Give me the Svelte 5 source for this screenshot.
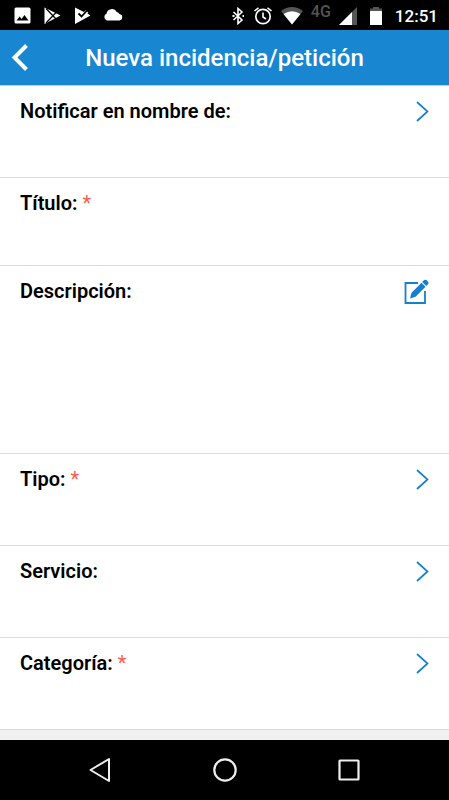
<script>
  let title = $state('');
  let description = $state('');
</script>

{#snippet chevron()}
  <svg class="icon" width="24" height="24" viewBox="0 0 24 24" aria-hidden="true">
    <path d="M12 3 L22.500 12.500 L12 22" fill="none" stroke="currentColor" stroke-width="1.700" />
  </svg>
{/snippet}

{#snippet picker(label, required)}
  <button type="button" class="row picker">
    <span class="label">{label}{#if required}<span class="required">{' *'}</span>{/if}</span>
    {@render chevron()}
  </button>
{/snippet}

<div class="screen">
  <div class="status-bar">
    <div class="notifications">
      <!-- picture -->
      <svg width="17" height="18" viewBox="0 0 17 18">
        <rect x="0.500" y="0.500" width="16" height="16" rx="1.500" fill="#fff" />
        <path d="M2.500 13.500 L5.700 9.500 L7.500 12 L10.500 8 L14.500 13.500 Z" fill="#000" />
      </svg>
      <!-- play -->
      <svg width="18" height="18" viewBox="0 0 18 18">
        <path d="M1.500 0.500 L17.500 8.500 L1.500 17 Z" fill="#fff" />
        <path d="M3 1.500 L13.500 12.500 M3 16 L13.500 5" stroke="#000" stroke-width="1.200" fill="none" />
      </svg>
      <!-- play with check -->
      <svg width="18" height="18" viewBox="0 0 18 18">
        <path d="M2 0.500 L11 5 L13 3 L15 5.500 L14.500 6.500 L17.500 8.500 L2 17 Z" fill="#fff" />
        <path d="M5.500 6.500 L8.500 9.500 L14 3.500" stroke="#000" stroke-width="1.800" fill="none" />
      </svg>
      <!-- cloud -->
      <svg width="20" height="18" viewBox="0 0 20 18">
        <path d="M3.800 13.500 A3.600 3.600 0 0 1 3.500 6.800 A5.500 5.500 0 0 1 13.800 5 A4 4 0 0 1 16.500 7 A3.300 3.300 0 0 1 16.500 13.500 Z" fill="#fff" />
      </svg>
    </div>
    <div class="system">
      <!-- bluetooth -->
      <svg width="14" height="18" viewBox="0 0 14 18">
        <path d="M2.500 5 L11 13 L7 16.500 V1.500 L11 5 L2.500 13" fill="none" stroke="#fff" stroke-width="1.600" />
        <path d="M1.500 8 H3.500 V10 H1.500 Z M11.500 8 H13 V10 H11.500 Z" fill="#fff" />
      </svg>
      <!-- alarm -->
      <svg width="20" height="18" viewBox="0 0 20 18">
        <circle cx="10" cy="9.500" r="7.200" fill="none" stroke="#fff" stroke-width="1.700" />
        <path d="M10 5.500 V10 L13 12 M1.500 4 L5.500 0.800 M18.500 4 L14.500 0.800" fill="none" stroke="#fff" stroke-width="1.600" />
      </svg>
      <!-- wifi -->
      <svg width="22" height="18" viewBox="0 0 22 18">
        <path d="M11 17.500 L0 4 Q11 -4 22 4 Z" fill="#555" />
        <path d="M11 17.500 L2.500 7 Q11 1.500 19.500 7 Z" fill="#fff" />
      </svg>
      <span class="network">4G</span>
      <!-- signal -->
      <svg width="18" height="18" viewBox="0 0 18 18">
        <path d="M0 18 L18 0 V18 Z" fill="#555" />
        <path d="M0 18 L13 5 V18 Z" fill="#fff" />
      </svg>
      <!-- battery -->
      <svg width="22" height="18" viewBox="0 0 22 18">
        <rect x="8" y="0" width="6" height="3" fill="#555" />
        <rect x="5" y="1.500" width="12" height="3" fill="#555" />
        <rect x="5" y="4" width="12" height="14" rx="0.500" fill="#fff" />
      </svg>
      <span class="time">12:51</span>
    </div>
  </div>

  <header>
    <button type="button" class="back" aria-label="Atrás">
      <svg width="20" height="28" viewBox="0 0 20 28">
        <path d="M16.500 1.500 L4.500 13.500 L16.500 25.500" fill="none" stroke="#fff" stroke-width="4" />
      </svg>
    </button>
    <h1>Nueva incidencia/petición</h1>
  </header>

  <form>
    {@render picker('Notificar en nombre de:', false)}

    <div class="row text-row">
      <label class="label" for="title">Título:<span class="required">{' *'}</span></label>
      <input id="title" type="text" bind:value={title} />
    </div>

    <div class="row description">
      <div class="description-head">
        <label class="label" for="description">Descripción:</label>
        <button type="button" class="edit" aria-label="Editar">
          <svg width="26" height="26" viewBox="0 0 26 26">
            <path d="M15 4 H2.500 V24 H22 V12" fill="none" stroke="currentColor" stroke-width="1.800" />
            <path d="M7 19.500 L8.500 13.800 L18.500 3.800 L22.500 7.800 L12.500 17.800 Z M19.200 3.100 L21.200 1.100 Q22.300 0.200 23.400 1.100 L25.200 2.900 Q26 4 25.200 5 L23.200 7.100 Z" fill="currentColor" />
          </svg>
        </button>
      </div>
      <textarea id="description" bind:value={description}></textarea>
    </div>

    {@render picker('Tipo:', true)}
    {@render picker('Servicio:', false)}
    {@render picker('Categoría:', true)}
  </form>

  <nav>
    <button type="button" aria-label="Volver">
      <svg width="24" height="24" viewBox="0 0 24 24">
        <path d="M21 1 V23 L2.500 12 Z" fill="none" stroke="#eee" stroke-width="2" stroke-linejoin="round" />
      </svg>
    </button>
    <button type="button" aria-label="Inicio">
      <svg width="24" height="24" viewBox="0 0 24 24">
        <circle cx="12" cy="12" r="10.700" fill="none" stroke="#eee" stroke-width="2.200" />
      </svg>
    </button>
    <button type="button" aria-label="Recientes">
      <svg width="24" height="24" viewBox="0 0 24 24">
        <rect x="2.500" y="2.500" width="19" height="19" rx="0.500" fill="none" stroke="#eee" stroke-width="2.200" />
      </svg>
    </button>
  </nav>
</div>

<style>
  :global(body) {
    background: #f0f0f0;
  }

  .screen {
    display: flex;
    flex-direction: column;
    min-height: 100vh;
    font-family: Roboto, 'Liberation Sans', sans-serif;
    color: #000;
  }

  button {
    padding: 0;
    border: 0;
    background: none;
    font: inherit;
    color: inherit;
    cursor: pointer;
  }

  svg {
    display: block;
    flex: none;
  }

  /* Status bar */
  .status-bar {
    box-sizing: border-box;
    display: flex;
    justify-content: space-between;
    align-items: center;
    height: 30px;
    padding: 1px 11px 0 14px;
    background: #000;
    color: #fff;
  }

  .notifications,
  .system {
    display: flex;
    align-items: center;
    gap: 12px;
  }

  .system {
    gap: 8px;
  }

  .network {
    align-self: flex-start;
    font-size: 16px;
    line-height: 12px;
    font-weight: 500;
    color: #555;
  }

  .time {
    font-size: 17px;
    line-height: 20px;
    font-weight: 500;
  }

  /* Header */
  header {
    display: grid;
    grid-template-columns: 40px 1fr 40px;
    align-items: center;
    height: 55px;
    background: #1886d0;
    border-bottom: 1px solid #c8d2dc;
    color: #fff;
  }

  .back {
    padding-left: 10px;
  }

  h1 {
    margin: 0;
    font-size: 24px;
    line-height: 28px;
    font-weight: 500;
    text-align: center;
  }

  /* Form */
  form {
    flex: 1;
  }

  .row {
    box-sizing: border-box;
    display: flex;
    width: 100%;
    padding: 13px 20px;
    background: #fff;
    border-bottom: 1px solid #dcdcdc;
  }

  .picker {
    min-height: 92px;
    justify-content: space-between;
    align-items: flex-start;
    text-align: left;
  }

  .label {
    font-size: 20px;
    line-height: 24px;
    font-weight: 600;
  }

  .required {
    font-weight: 400;
    color: #ff5a4f;
    white-space: pre;
  }

  .icon,
  .edit {
    color: #1580ce;
  }

  .text-row,
  .description {
    flex-direction: column;
    min-height: 88px;
  }

  .description {
    min-height: 188px;
  }

  .description-head {
    display: flex;
    justify-content: space-between;
  }

  input,
  textarea {
    box-sizing: border-box;
    flex: 1;
    width: 100%;
    padding: 0;
    border: 0;
    outline: 0;
    resize: none;
    background: none;
    font: inherit;
    font-size: 20px;
  }

  /* Navigation bar */
  nav {
    display: flex;
    justify-content: space-evenly;
    align-items: center;
    height: 60px;
    background: #000;
  }

  nav button {
    padding: 12px;
  }
</style>
